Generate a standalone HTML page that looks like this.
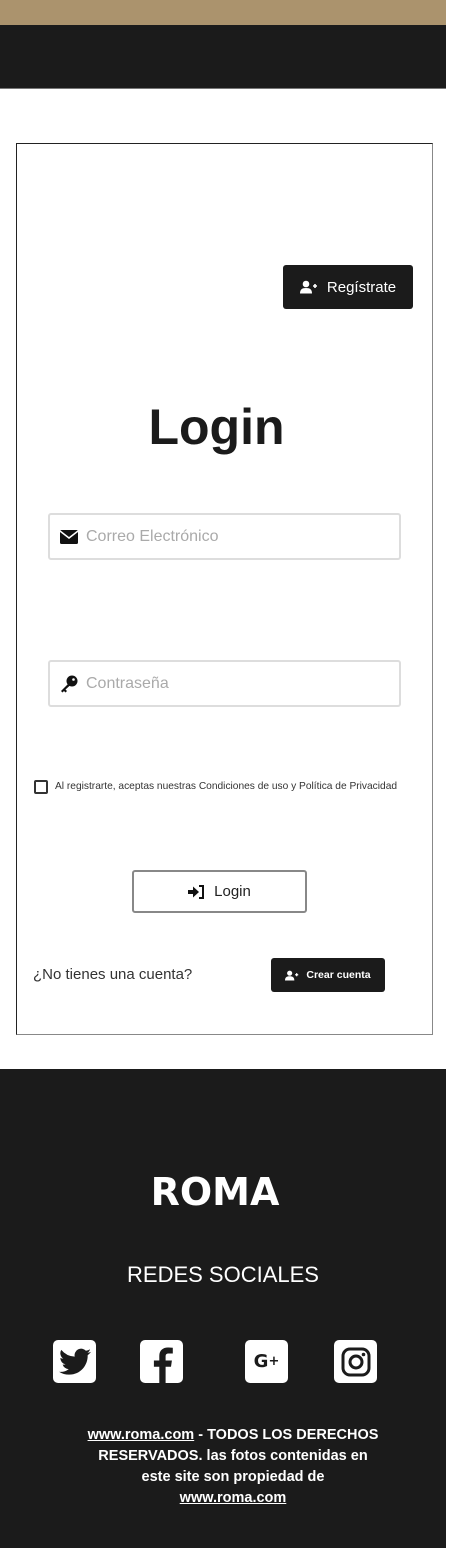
<!DOCTYPE html>
<html><head><meta charset="utf-8"><style>
*{margin:0;padding:0;box-sizing:border-box}
body{width:450px;height:1552px;background:#fff;position:relative;font-family:"Liberation Sans",sans-serif;overflow:hidden}
.a{position:absolute}
.btn{background:#1b1b1b;color:#fff;border-radius:3px;display:flex;align-items:center;justify-content:center}
.inp{border:2px solid #ddd;border-radius:3px;display:flex;align-items:center;color:#aaa;font-size:16px}
.ic{background:#fff;border-radius:5px;width:43px;height:43px;display:flex;align-items:center;justify-content:center}
</style></head><body>
<div class="a" style="left:0;top:0;width:446px;height:25px;background:#ab936d"></div>
<div class="a" style="left:0;top:25px;width:446px;height:64px;background:#1b1b1b;border-bottom:1px solid #777"></div>
<div class="a" style="left:16px;top:143px;width:417px;height:892px;border:1px solid #222;border-right-color:#888;border-bottom-color:#888"></div>
<div class="a btn" style="left:283px;top:265px;width:130px;height:44px;font-size:15px"><svg width="18" height="14" viewBox="0 0 18 14" style="margin-right:9px"><circle cx="6" cy="4" r="3.3" fill="#fff"/><path d="M0 13.5C0 9.5 2 8 6 8s6 1.5 6 5.5z" fill="#fff"/><path d="M13 6h4M15 4v4" stroke="#fff" stroke-width="1.6"/></svg>Regístrate</div>
<div class="a" style="left:0;width:433px;top:398px;text-align:center;font-size:50px;font-weight:bold;color:#1b1b1b">Login</div>
<div class="a inp" style="left:48px;top:513px;width:353px;height:47px"><svg width="18" height="14" viewBox="0 0 18 14" style="margin:0 8px 0 10px"><rect x="0" y="0" width="18" height="14" rx="1.5" fill="#111"/><path d="M0 1l9 7 9-7" stroke="#fff" stroke-width="1.5" fill="none"/></svg>Correo Electrónico</div>
<div class="a inp" style="left:48px;top:660px;width:353px;height:47px"><svg width="18" height="18" viewBox="0 0 18 18" style="margin:0 8px 0 10px"><circle cx="12" cy="6" r="5.5" fill="#111"/><path d="M9 8L1 16l1.5 1.5L4 16l1.5 1.5L7 16l-1.5-1.5L10.5 10z" fill="#111"/><circle cx="13.5" cy="4.5" r="1.3" fill="#fff"/></svg>Contraseña</div>
<div class="a" style="left:34px;top:780px;width:14px;height:14px;border:2px solid #333;border-radius:2px"></div>
<div class="a" style="left:55px;top:781px;font-size:10.2px;color:#333;white-space:nowrap">Al registrarte, aceptas nuestras Condiciones de uso y Política de Privacidad</div>
<div class="a" style="left:132px;top:870px;width:175px;height:43px;border:2px solid #888;border-radius:3px;display:flex;align-items:center;justify-content:center;font-size:15px;color:#222"><svg width="17" height="14" viewBox="0 0 17 14" style="margin-right:9px"><path d="M0 5h5V1.5L11 7l-6 5.5V9H0z" fill="#111"/><path d="M11 1h4v12h-4" stroke="#111" stroke-width="2" fill="none"/></svg>Login</div>
<div class="a" style="left:33px;top:966px;font-size:15px;color:#333">¿No tienes una cuenta?</div>
<div class="a btn" style="left:271px;top:958px;width:114px;height:34px;font-size:10.5px;font-weight:bold"><svg width="14" height="11" viewBox="0 0 18 14" style="margin-right:7px"><circle cx="6" cy="4" r="3.3" fill="#fff"/><path d="M0 13.5C0 9.5 2 8 6 8s6 1.5 6 5.5z" fill="#fff"/><path d="M13 6h4M15 4v4" stroke="#fff" stroke-width="1.6"/></svg>Crear cuenta</div>
<div class="a" style="left:0;top:1069px;width:446px;height:479px;background:#1b1b1b"></div>
<div class="a" style="left:0;width:430px;top:1170px;text-align:center;font-size:38px;font-weight:bold;color:#fff;font-family:'DejaVu Sans',sans-serif">ROMA</div>
<div class="a" style="left:0;width:446px;top:1262px;text-align:center;font-size:22px;color:#fff">REDES SOCIALES</div>
<div class="a ic" style="left:53px;top:1340px"><svg width="32" height="28" viewBox="0 0 24 20"><path d="M24 2.4a10 10 0 0 1-2.8.8A5 5 0 0 0 23.3.4a10 10 0 0 1-3.1 1.2A4.9 4.9 0 0 0 11.8 6 14 14 0 0 1 1.7.9a4.9 4.9 0 0 0 1.5 6.6A4.9 4.9 0 0 1 1 6.9 4.9 4.9 0 0 0 4.9 11.8a5 5 0 0 1-2.2.1 4.9 4.9 0 0 0 4.6 3.4A9.9 9.9 0 0 1 0 17.3 14 14 0 0 0 7.5 19.5c9.1 0 14-7.5 14-14v-.6A10 10 0 0 0 24 2.4z" fill="#1b1b1b"/></svg></div>
<div class="a ic" style="left:140px;top:1340px;align-items:flex-end"><svg width="22" height="36" viewBox="0 0 12 20"><path d="M8 20v-9h3l.5-3.5H8V5.3c0-1 .3-1.7 1.7-1.7H12V.4A25 25 0 0 0 9.2.3C6.6.3 4.5 1.9 4.5 4.9v2.6H1.5V11h3v9z" fill="#1b1b1b"/></svg></div>
<div class="a ic" style="left:245px;top:1340px;font-weight:bold;font-size:18px;color:#1b1b1b;font-family:'DejaVu Sans',sans-serif">G<span style="font-size:13px">+</span></div>
<div class="a ic" style="left:334px;top:1340px"><svg width="32" height="32" viewBox="0 0 32 32"><rect x="3" y="3" width="26" height="26" rx="7" fill="none" stroke="#1b1b1b" stroke-width="3"/><circle cx="16" cy="16" r="6" fill="none" stroke="#1b1b1b" stroke-width="3"/><circle cx="23.5" cy="8.5" r="1.8" fill="#1b1b1b"/></svg></div>
<div class="a" style="left:60px;width:346px;top:1425px;text-align:center;font-size:14.5px;line-height:21px;font-weight:bold;color:#fff;font-family:'Liberation Sans',sans-serif;white-space:nowrap"><u>www.roma.com</u> - TODOS LOS DERECHOS<br>RESERVADOS. las fotos contenidas en<br>este site son propiedad de<br><u>www.roma.com</u></div>
</body></html>
